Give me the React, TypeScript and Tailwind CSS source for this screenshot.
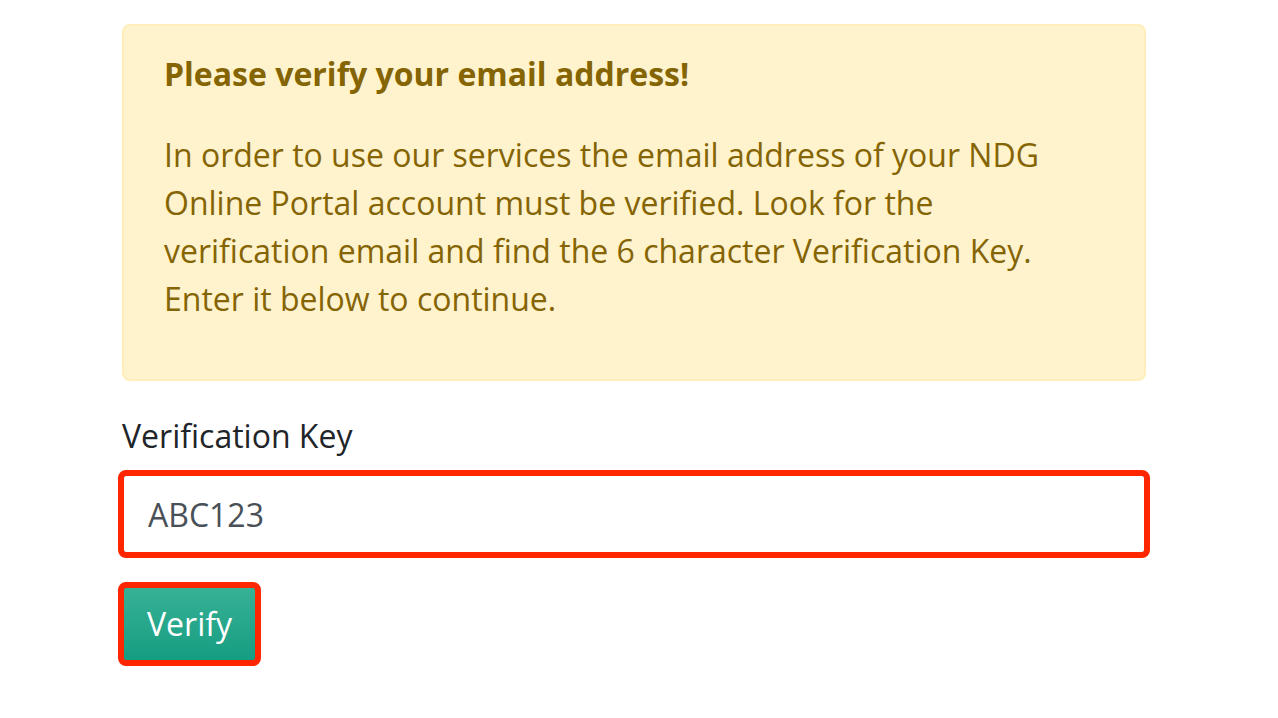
export default function App() {
  return (
    <div className="min-h-screen bg-white font-['Open_Sans',sans-serif]">
      <div className="ml-[122px] w-[1024px] pt-[24px]">
        {/* Warning alert */}
        <div className="rounded-[8px] border-2 border-[#ffeeba] bg-[#fff3cd] px-[40px] pt-[29px] pb-[24px] text-[#856404]">
          <h4 className="mb-[38px] text-[32px] font-bold leading-[1.2]">Please verify your email address!</h4>
          <p className="mb-[32px] text-[32px] leading-[48px]">
            In order to use our services the email address of your NDG Online Portal account must be verified. Look for
            the verification email and find the 6 character Verification Key. Enter it below to continue.
          </p>
        </div>

        {/* Form */}
        <div className="mt-[31px] mb-[32px]">
          <label className="mb-[14px] block text-[32px] leading-[48px] text-[#212529]">Verification Key</label>
          <input
            type="text"
            defaultValue="ABC123"
            className="block h-[80px] w-full rounded-[4px] border-2 border-[#9fd9cc] bg-white px-[24px] text-[32px] text-[#495057] outline-[6px] outline-offset-[-2px] outline-solid outline-[#ff2600]"
          />
        </div>
        <button className="h-[76px] rounded-[4px] border-2 border-[#17a085] bg-linear-to-b from-[#36b196] to-[#139d81] px-[23px] text-[32px] leading-[48px] text-white outline-[6px] outline-offset-[-2px] outline-solid outline-[#ff2600]">
          Verify
        </button>
      </div>
    </div>
  );
}
